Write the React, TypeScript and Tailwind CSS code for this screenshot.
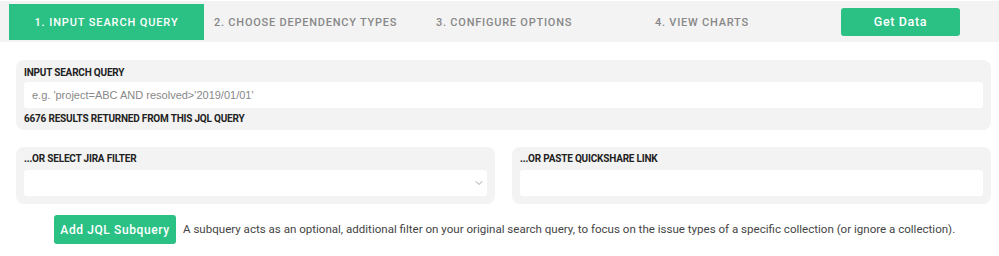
import { ChevronDown } from 'lucide-react';

const tabs = [
  '1. INPUT SEARCH QUERY',
  '2. CHOOSE DEPENDENCY TYPES',
  '3. CONFIGURE OPTIONS',
  '4. VIEW CHARTS',
];

const App = () => {
  return (
    <div className="w-[999px] h-[256px] bg-white font-['Roboto',sans-serif] overflow-hidden">
      {/* step nav */}
      <div className="mt-px h-[41px] bg-[#f3f3f3] flex items-center pl-[9px]">
        <div className="w-[195px] h-[36px] bg-[#2bc185] flex items-center justify-center pt-[3px] text-white text-[11px] font-medium tracking-[0.08em]">
          {tabs[0]}
        </div>
        <div className="w-[222px] pl-[10px] pt-[3px] text-[#888] text-[11px] font-medium tracking-[0.07em]">{tabs[1]}</div>
        <div className="w-[219px] pl-[10px] pt-[3px] text-[#888] text-[11px] font-medium tracking-[0.07em]">{tabs[2]}</div>
        <div className="w-[196px] pl-[10px] pt-[3px] text-[#888] text-[11px] font-medium tracking-[0.07em]">{tabs[3]}</div>
        <button className="w-[119px] h-[28px] rounded-[3px] bg-[#2bc185] text-white text-[12.5px] font-medium tracking-[0.05em] pt-px">
          Get Data
        </button>
      </div>

      <div className="w-[975px] ml-[16px]">
        {/* search query */}
        <div className="mt-[18px] h-[70px] rounded-[8px] bg-[#f3f3f3] px-[8px] pt-[6px]">
          <div className="text-[10px] font-bold text-[#222] tracking-[-0.02em] leading-[14px]">INPUT SEARCH QUERY</div>
          <div className="mt-[2px] h-[26px] bg-white rounded-[3px] flex items-center px-[8px] font-['Liberation_Sans',sans-serif] text-[11px] text-[#888]">
            e.g. 'project=ABC AND resolved&gt;'2019/01/01'
          </div>
          <div className="mt-[4px] text-[10px] font-bold text-[#222] tracking-[-0.02em] leading-[14px]">
            6676 RESULTS RETURNED FROM THIS JQL QUERY
          </div>
        </div>

        {/* filter / quickshare */}
        <div className="mt-[17px] grid grid-cols-2 gap-[17px]">
          <div className="h-[57px] rounded-[8px] bg-[#f3f3f3] px-[8px] pt-[5px]">
            <div className="text-[10px] font-bold text-[#222] tracking-[-0.02em] leading-[14px]">...OR SELECT JIRA FILTER</div>
            <div className="mt-[4px] h-[26px] bg-white rounded-[3px] flex items-center justify-end pr-[2px]">
              <ChevronDown className="w-[12px] h-[12px] text-[#888]" strokeWidth={1.5} />
            </div>
          </div>
          <div className="h-[57px] rounded-[8px] bg-[#f3f3f3] px-[8px] pt-[5px]">
            <div className="text-[10px] font-bold text-[#222] tracking-[-0.02em] leading-[14px]">...OR PASTE QUICKSHARE LINK</div>
            <div className="mt-[4px] h-[26px] bg-white rounded-[3px]" />
          </div>
        </div>

        {/* subquery */}
        <div className="mt-[11px] pl-[38px] flex items-center gap-[7px]">
          <button className="w-[122px] h-[29px] rounded-[3px] bg-[#2bc185] text-white text-[12px] font-medium tracking-[0.05em]">
            Add JQL Subquery
          </button>
          <span className="whitespace-nowrap text-[11.55px] text-[#444]">
            A subquery acts as an optional, additional filter on your original search query, to focus on the issue types of a specific collection (or ignore a collection).
          </span>
        </div>
      </div>
    </div>
  );
};

export default App;
